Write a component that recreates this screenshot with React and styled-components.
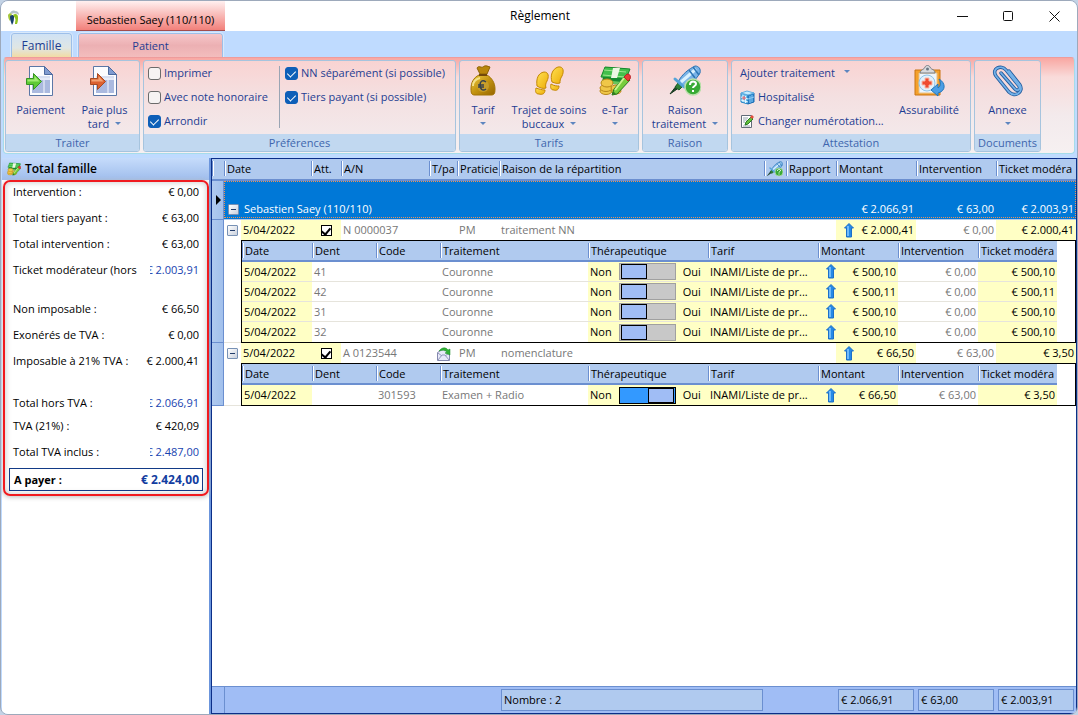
import React, { useState } from "react";
import styled, { createGlobalStyle } from "styled-components";

const GlobalStyle = createGlobalStyle`
  * {
    box-sizing: border-box;
  }
  body {
    margin: 0;
    background: #c3d3e6;
    font-family: "Open Sans", "Noto Sans", sans-serif;
    font-size: 11px;
    line-height: 14px;
    color: #000;
  }
  button,
  input {
    font: inherit;
    margin: 0;
  }
`;

/* ---------- icons ---------- */

const LogoIcon = () => (
  <svg width="12" height="16" viewBox="0 0 12 16" aria-hidden="true">
    <path d="M2 3C3 1 5 0 7 1c3 0 4 2 4 4C9 3 7 4 6 3 5 4 3 4 2 3z" fill="#b4c3c9" />
    <path d="M0 5c1-2 3-2 4-1L3 6c0 2 0 3-1 5C1 10 0 8 0 5z" fill="#a5c63b" />
    <path d="M2 7c0-2 3-3 4-1 0 3 0 6-2 9-1-3-2-5-2-8z" fill="#17406d" />
    <path d="M5 5c2-2 5-1 5 2 0 2 0 5-1 7H7c0-3 1-4 0-6z" fill="#8fc31f" />
  </svg>
);

const PageArrowIcon = ({ light, dark, edge }) => (
  <svg width="32" height="32" viewBox="2 0 32 32" aria-hidden="true">
    <path d="M6.500 1.500h15l8 8v21h-23z" fill="#fbfcff" stroke="#5b77a6" />
    <path d="M9 11h18v17H9z" fill="#aab9df" />
    <path d="M9 11h18v4H9z" fill="#d7dff2" />
    <path d="M11 14h16M21 15v13" stroke="#f5f7fd" />
    <path d="M21.500 1.500v8h8z" fill="#7f9bd0" stroke="#4d6a9f" />
    <path d="M3.500 13.500h7v-5l8 8-8 8v-5h-7z" fill={dark} stroke={edge} />
    <path d="M4.500 14.500h7v-3.500l5 5.500h-12z" fill={light} />
  </svg>
);

const MoneyBagIcon = () => (
  <svg width="28" height="32" viewBox="0 0 28 32" aria-hidden="true">
    <defs>
      <linearGradient id="bag" x1="0" y1="0" x2="1" y2="1">
        <stop offset="0" stopColor="#f0cf45" />
        <stop offset=".5" stopColor="#c39310" />
        <stop offset="1" stopColor="#966500" />
      </linearGradient>
    </defs>
    <path
      d="M10 10C4 13 2 18 2 24c0 5 1 6 4 6h16c3 0 4-1 4-6 0-6-3-11-8-14z"
      fill="url(#bag)"
      stroke="#a37407"
    />
    <path d="M8 3c2-3 4 0 6-1 2-2 4-1 7 0l-3 7h-7z" fill="#b9860b" stroke="#8d6204" />
    <path d="M10 9h8v2h-8z" fill="#72490a" />
    <path d="M4 21c0-5 3-7 7-8" stroke="#f4e28b" strokeWidth="2" fill="none" />
    <circle cx="14" cy="21" r="6" fill="#cca436" opacity=".7" />
    <path
      d="M17 17c-4-3-6 0-6 3s2 7 6 4M9 20h6M9 22h6"
      stroke="#38424c"
      strokeWidth="1.500"
      fill="none"
    />
  </svg>
);

const FootprintsIcon = () => (
  <svg width="32" height="32" viewBox="0 0 32 32" aria-hidden="true">
    <defs>
      <linearGradient id="foot" x1="0" y1="0" x2="1" y2="1">
        <stop offset="0" stopColor="#ffe052" />
        <stop offset="1" stopColor="#edac08" />
      </linearGradient>
    </defs>
    <g fill="url(#foot)" stroke="#c48804">
      <path d="M4 21C3 14 5 8 11 7c5 0 5 5 3 9-1 2-2 4-1 7-3 1-6 0-9-2z" />
      <path d="M3 23c3 1 6 2 9 2 0 4-3 5-6 4-3 0-4-2-3-6z" />
      <path d="M19 17c-2-6 0-13 6-15 6-1 6 5 4 9-2 3-2 5-2 7-3 1-5 0-8-1z" />
      <path d="M18 19c3 2 6 2 8 2 0 4-3 5-5 4-3 0-4-2-3-6z" />
    </g>
  </svg>
);

const MoneyEditIcon = ({ size = 32 }) => (
  <svg width={size} height={size} viewBox="0 0 32 32" aria-hidden="true">
    <path d="M6 2l24 2-3 15-24-2z" fill="#168932" />
    <path d="M6 2l25 2-4 10L2 12z" fill="#43bf4c" stroke="#168a2c" />
    <path d="M5 5l22 2M4 10l22 2" stroke="#9be68f" />
    <path d="M14 3h7l-3 10h-6z" fill="#edf6e4" />
    <path d="M3 15l21 2-1 3-21-2z" fill="#68c75d" />
    <g fill="#f0c748" stroke="#b78618">
      <ellipse cx="7" cy="26" rx="6" ry="3.500" />
      <ellipse cx="7" cy="23" rx="6" ry="3.500" />
      <ellipse cx="8" cy="18" rx="6" ry="4" />
      <ellipse cx="17" cy="26" rx="5" ry="3" />
      <ellipse cx="17" cy="23" rx="5" ry="3" />
    </g>
    <path d="M26 11l5 4-13 14-5 1 2-6z" fill="#77cd3d" stroke="#287c1c" />
    <path d="M25 13l-9 12" stroke="#c9f38e" strokeWidth="2" />
    <path d="M25 12l3-3c3 0 4 2 3 5l-2 2z" fill="#e63d35" stroke="#b82025" />
    <path d="M13 30l1-4 3 3z" fill="#2e7b20" />
  </svg>
);

const PenHelpIcon = ({ size = 32 }) => (
  <svg width={size} height={size} viewBox="0 0 32 32" aria-hidden="true">
    <path d="M1 29l7-9 3 2z" fill="#1c4728" stroke="#16381f" />
    <path d="M6 22l3-4 4 4-3 3z" fill="#2e8137" stroke="#1f5d2a" />
    <path d="M9 17C13 9 20 4 26 1c4 0 6 3 5 7-5 8-9 11-17 14z" fill="#7ab3e7" stroke="#2972b3" />
    <path d="M12 17L27 4" stroke="#d9f1ff" strokeWidth="3" />
    <path d="M24 2l6 8M20 5l6 8" stroke="#2c75b5" strokeWidth="1.500" />
    <path d="M6 14l9 8" stroke="#54a4d9" strokeWidth="3" strokeLinecap="round" />
    <circle cx="24" cy="22" r="8" fill="#39aa35" stroke="#b9dfaa" strokeWidth="1.500" />
    <path d="M21 20c0-5 6-4 6-1 0 2-3 2-3 4M24 25v2" fill="none" stroke="#fff" strokeWidth="2" />
  </svg>
);

const BuildingIcon = () => (
  <svg width="15" height="15" viewBox="0 0 15 15" aria-hidden="true">
    <path d="M1 3l7 2v9l-7-2z" fill="#70c0ef" stroke="#2584c5" />
    <path d="M8 5l6-2v9l-6 2z" fill="#2b84cc" stroke="#1c6db4" />
    <path d="M1 3l6-2 7 2-6 2z" fill="#c5ecff" stroke="#62afe2" />
    <path d="M3 5v7M5.500 6v7M1 7l7 2M1 10l7 2" stroke="#e4f7ff" />
    <path d="M10 6v7M12 5v7M8 9l6-2" stroke="#8bcaf5" />
    <path d="M2 8h4M4 6v4" stroke="#df5965" />
  </svg>
);

const NoteEditIcon = () => (
  <svg width="15" height="15" viewBox="0 0 15 15" aria-hidden="true">
    <path d="M1.500 1.500h10v12h-10z" fill="#fff" stroke="#626b78" />
    <path d="M3 4h5M3 6h4M3 8h2M3 12h7" stroke="#98a4b0" />
    <path d="M5 11l1-3 5-5 2 2-5 5z" fill="#65bf3c" stroke="#287b24" />
    <path d="M10 3l2-2 2 2-2 2z" fill="#e44d3d" />
  </svg>
);

const ClipboardIcon = () => (
  <svg width="32" height="32" viewBox="0 0 32 32" aria-hidden="true">
    <path d="M2 5h25v25H2z" fill="#f4a12c" stroke="#c97512" />
    <path d="M6 8h18v20H6z" fill="#edf5fc" stroke="#e7c189" />
    <path d="M7 8c1-4 4-3 5-6 1-2 4-2 5 0 1 3 5 2 5 6z" fill="#d9dadd" stroke="#777e86" />
    <circle cx="14.500" cy="4" r="1.500" fill="#6c7783" />
    <circle cx="14" cy="18" r="8" fill="#e2f0fb" stroke="#8fc4e9" />
    <path d="M12 13h4v3h3v4h-3v3h-4v-3H9v-4h3z" fill="#ef4c30" stroke="#f9b9a8" />
    <path d="M26 14c7 4 7 12-1 14v3l-7-6 7-6v4c3-2 3-5 1-9z" fill="#4c9ee5" stroke="#2276ba" />
  </svg>
);

const PaperclipIcon = () => (
  <svg width="32" height="32" viewBox="0 0 32 32" aria-hidden="true">
    <g fill="none" strokeLinecap="round">
      <path
        d="M9 8l14 16c2 3 6 0 4-3L14 5C9-1-1 4 4 11l13 16c6 6 15 0 11-7L17 6"
        stroke="#235c9e"
        strokeWidth="3.500"
      />
      <path
        d="M9 8l14 16c2 3 6 0 4-3L14 5C9-1-1 4 4 11l13 16c6 6 15 0 11-7L17 6"
        stroke="#73b1e8"
        strokeWidth="1.800"
      />
    </g>
  </svg>
);

const ArrowUpIcon = () => (
  <svg width="10" height="15" viewBox="0 0 10 15" aria-hidden="true">
    <path d="M5 .500L9.500 5H7.500v9h-5V5H.500z" fill="#2589e6" stroke="#1c6fc9" />
    <path d="M4 3v10" stroke="#8acbff" strokeWidth="1.500" />
  </svg>
);

const MailIcon = () => (
  <svg width="15" height="14" viewBox="0 0 15 14" aria-hidden="true">
    <path d="M1.500 5.500L7 2l6.500 3.500v8h-12z" fill="#e8e9f8" stroke="#8589ae" />
    <path d="M2 13l4-5h3l4 5M2 6l4 3M13 6L9 9" fill="none" stroke="#9297bc" />
    <path d="M3 4c3-4 7-4 9-1l2-1v6L9 6l2-1C9 3 6 3 3 4z" fill="#32b136" stroke="#188a24" strokeWidth=".5" />
  </svg>
);

/* ---------- window frame ---------- */

const Window = styled.div`
  display: flex;
  flex-direction: column;
  min-height: 100vh;
  overflow: hidden;
  border: 1px solid #9da9bb;
  border-radius: 8px;
  background: #bfdbff;
`;

const TitleBar = styled.header`
  display: grid;
  grid-template-columns: 75px 149px 1fr auto;
  height: 30px;
  background: #fff;
`;

const Logo = styled.div`
  padding: 9px 0 0 7px;
`;

const ContextTitle = styled.div`
  display: flex;
  align-items: center;
  justify-content: center;
  padding-top: 8px;
  white-space: nowrap;
  background: linear-gradient(#fff0f0, #f2807a);
  border-bottom: 1px solid #a34d4d;
`;

const WindowTitle = styled.h1`
  margin: 0;
  padding-left: 285px;
  font-size: 12px;
  font-weight: 400;
  line-height: 30px;
`;

const WindowButtons = styled.div`
  display: flex;
`;

const WindowButton = styled.button`
  display: flex;
  align-items: center;
  justify-content: center;
  width: 46px;
  padding: 0;
  border: 0;
  background: none;
`;

const TabStrip = styled.nav`
  display: flex;
  align-items: flex-end;
  gap: 6px;
  height: 26px;
  padding-left: 10px;
`;

const Tab = styled.button`
  width: ${props => props.$width}px;
  height: 24px;
  padding: 0;
  border: 1px solid #9dbfe9;
  border-bottom: 0;
  border-radius: 3px 3px 0 0;
  outline: 1px solid #d9e9fb;
  color: #1e3d92;
  font-size: ${props => (props.$active ? 11 : 12)}px;
  background: ${props =>
    props.$active
      ? "linear-gradient(#f6c6c9, #ecb0b3 50%, #f3bdbd)"
      : "linear-gradient(#cfe2f5, #e0e6e4 60%, #f2dca4)"};
`;

/* ---------- ribbon ---------- */

const Ribbon = styled.section`
  display: flex;
  gap: 3px;
  height: 97px;
  margin: 0 2px 4px;
  padding: 2px 1px 1px;
  border: 1px solid #a5dcea;
  border-top-color: #ee9c9c;
  border-radius: 4px;
  background: linear-gradient(#f9a7a2, #f9dbda 20%, #f3eaec 60%, #f6f0f1);
`;

const Group = styled.section`
  display: flex;
  flex-direction: column;
  width: ${props => props.$width}px;
  overflow: hidden;
  border: 1px solid #a6c4de;
  border-radius: 3px;
  background: linear-gradient(#f9d3d2, #f4e0e1 40%, #f3ecee);
`;

const GroupBody = styled.div`
  display: flex;
  flex: 1;
  justify-content: ${props => props.$align || "center"};
  padding-left: ${props => props.$indent || 0}px;
`;

const GroupTitle = styled.h2`
  margin: 0;
  font-size: 11px;
  font-weight: 400;
  line-height: 17px;
  text-align: center;
  white-space: nowrap;
  color: #3f66ae;
  background: #c1d8f0;
`;

const BigButton = styled.button`
  display: flex;
  flex-direction: column;
  align-items: center;
  width: ${props => props.$width}px;
  padding: 4px 0 0;
  border: 0;
  background: none;
  color: #1e3d92;
  line-height: 14px;
  white-space: nowrap;

  svg {
    margin-bottom: 6px;
  }
`;

const Caret = styled.i`
  display: inline-block;
  margin: ${props => (props.$below ? "5px auto 0" : "0 0 3px 6px")};
  border: 3px solid transparent;
  border-top-color: #5d85bf;
  border-bottom: 0;
`;

const OptionColumn = styled.div`
  display: flex;
  flex-direction: column;
  min-width: 124px;
`;

const Option = styled.label`
  display: flex;
  align-items: center;
  gap: 3px;
  height: 24px;
  color: #1e3d92;
  white-space: nowrap;
`;

const OptionBox = styled.input`
  appearance: none;
  display: flex;
  justify-content: center;
  width: 13px;
  height: 13px;
  border: 1px solid #6b6b6b;
  border-radius: 3px;
  background: #f6f3f3;

  &:checked {
    border-color: #0e5fb8;
    background: #0e5fb8;
  }

  &:checked::after {
    content: "";
    width: 4px;
    height: 7px;
    margin-top: 1px;
    border: solid #fff;
    border-width: 0 1px 1px 0;
    transform: rotate(45deg);
  }
`;

const Divider = styled.div`
  width: 1px;
  height: 62px;
  margin: 5px 5px 0 7px;
  background: #9aa5b4;
`;

const SmallButton = styled.button`
  display: flex;
  align-items: center;
  gap: 3px;
  height: 24px;
  padding: 0;
  border: 0;
  background: none;
  color: #1e3d92;
  white-space: nowrap;
`;

/* ---------- family totals ---------- */

const Body = styled.main`
  display: flex;
  flex: 1;
  padding-left: 1px;
`;

const Side = styled.aside`
  display: flex;
  flex-direction: column;
  width: 209px;
  border-right: 2px solid #6b95dc;
  background: #fff;
`;

const SideTitle = styled.h2`
  display: flex;
  align-items: center;
  gap: 4px;
  height: 22px;
  margin: 0;
  padding-left: 5px;
  font-size: 12px;
  font-weight: 600;
  background: linear-gradient(#c6dcfb, #9fbdec);
`;

const TotalsFrame = styled.section`
  margin: 0 0 0 1px;
  padding: 0 4px 3px;
  border: 2px solid #f01a1f;
  border-radius: 7px;
  box-shadow: 0 1px 5px #bbb, inset 0 0 6px #c4c4c4;
`;

const TotalRow = styled.div`
  display: flex;
  justify-content: space-between;
  height: 20px;
  margin-top: ${props => props.$gap}px;
  padding: 0 4px;
  line-height: 20px;
  white-space: nowrap;
`;

const TotalValue = styled.output`
  display: flex;
  justify-content: flex-end;
  overflow: hidden;
  ${props => props.$computed && "width: 49px; color: #1743b0;"}
`;

const Payable = styled.div`
  display: flex;
  justify-content: space-between;
  align-items: center;
  height: 23px;
  margin-top: 6px;
  padding: 0 3px 0 4px;
  border: 1px solid #123a86;
  font-weight: 700;

  output {
    color: #123da0;
    font-size: 12px;
  }
`;

/* ---------- grid ---------- */

const GridPanel = styled.section`
  display: flex;
  flex: 1;
  flex-direction: column;
  min-width: 0;
  border: 1px solid #0b2e88;
  background: #fff;
`;

const GridTable = styled.table`
  width: 100%;
  table-layout: fixed;
  border-collapse: separate;
  border-spacing: 0;
  white-space: nowrap;
`;

const HeadCell = styled.th`
  height: ${props => (props.$sub ? 21 : 22)}px;
  padding: 0 0 0 3px;
  overflow: hidden;
  font-weight: 400;
  text-align: left;
  vertical-align: middle;
  border-bottom: 2px solid #6b8fd0;
  background: linear-gradient(90deg, #6b8fd0 1px, #fff 1px, #fff 2px, transparent 2px) 0 2px / 2px 15px
      no-repeat,
    #b0caef;

  svg {
    display: block;
  }
`;

const RowHead = styled.td`
  padding: 0;
  border-right: 1px solid #6b8fd0;
  border-bottom: 1px solid #6b8fd0;
  background: linear-gradient(90deg, #b0caef, #a2c0ec);
`;

const Marker = styled.i`
  display: block;
  margin-left: 4px;
  border: 5px solid transparent;
  border-left-color: #000;
  border-right: 0;
`;

const Cell = styled.td`
  height: 20px;
  padding: 0 2px;
  overflow: hidden;
  color: ${props => (props.$edit ? "#000" : "#777")};
  background: ${props => (props.$edit ? "#ffffc5" : "#fff")};
  text-align: ${props => props.$align || "left"};
  border-bottom: ${props => (props.$line ? "1px solid #e6e4dc" : "0")};

  svg {
    display: inline-block;
    vertical-align: middle;
  }
`;

const PatientCell = styled.td`
  height: 39px;
  padding: 0 0 1px;
  border-bottom: 1px solid #b0caef;
  color: #fff;
  background: #0078d7;
`;

const PatientLine = styled.div`
  display: flex;
  align-items: flex-end;
  height: 37px;
  padding: 0 1px 1px 2px;
  border: 1px dotted #f29151;
`;

const PatientName = styled.span`
  flex: 1;
  padding-left: 5px;
`;

const PatientAmount = styled.span`
  width: 80px;
  text-align: right;
`;

const ExpandButton = styled.button`
  display: flex;
  align-items: center;
  justify-content: center;
  width: 11px;
  height: 11px;
  padding: 0;
  border: 1px solid #7791b5;
  border-radius: 1px;
  background: linear-gradient(135deg, #fff, #c9d0dd);

  &::after {
    content: "";
    width: 5px;
    height: 1px;
    background: #223c6a;
  }
`;

const ExpandSlot = styled.span`
  display: flex;
  align-items: center;
  height: 14px;
  padding-left: 1px;
`;

const AttestBox = styled.input`
  appearance: none;
  display: flex;
  justify-content: center;
  width: 11px;
  height: 11px;
  margin: 0 auto;
  border: 1px solid #000;
  background: #fff;

  &:checked::after {
    content: "";
    width: 4px;
    height: 7px;
    border: solid #000;
    border-width: 0 2px 2px 0;
    transform: rotate(40deg);
  }
`;

const AmountLine = styled.div`
  display: flex;
  align-items: center;
  justify-content: space-between;
  padding-left: 6px;
`;

const DetailCell = styled.td`
  padding: 0;
`;

const DetailFrame = styled.div`
  padding-right: 18px;
  border: 1px solid #000;
`;

const SwitchLabel = styled.label`
  display: flex;
  align-items: center;
  gap: 7px;
`;

const Switch = styled.input`
  appearance: none;
  display: flex;
  align-items: center;
  width: 57px;
  height: 17px;
  padding: 0 1px;
  border: 1px solid #a0a0a0;
  background: #c8c8c8;

  &::after {
    content: "";
    width: 24px;
    height: 13px;
    border: 1px solid #000;
    background: #a0bdf5;
  }

  &:checked {
    justify-content: flex-end;
    border-color: #000;
    background: #3399ff;
  }
`;

const Summary = styled.footer`
  display: grid;
  grid-template-columns: 285px 262px 1fr 76px 76px 76px;
  column-gap: 4px;
  margin-top: auto;
  padding: 2px 2px 2px 0;
  border-top: 1px solid #6b8fd0;
  background: linear-gradient(90deg, #a0bdf5 12px, #6b8fd0 12px, #6b8fd0 13px, #a0bdf5 13px);
`;

const SummaryBox = styled.output`
  height: 22px;
  padding-left: 2px;
  grid-column: ${props => props.$col};
  line-height: 20px;
  white-space: nowrap;
  border: 1px solid #6b8fd0;
  background: #b0caef;
`;

/* ---------- data ---------- */

const totals = [
  { label: "Intervention :", value: "€ 0,00", gap: 0 },
  { label: "Total tiers payant :", value: "€ 63,00", gap: 6 },
  { label: "Total intervention :", value: "€ 63,00", gap: 6 },
  { label: "Ticket modérateur (hors", value: "€ 2.003,91", gap: 6, computed: true },
  { label: "Non imposable :", value: "€ 66,50", gap: 19 },
  { label: "Exonérés de TVA :", value: "€ 0,00", gap: 6 },
  { label: "Imposable à 21% TVA :", value: "€ 2.000,41", gap: 6 },
  { label: "Total hors TVA :", value: "€ 2.066,91", gap: 22, computed: true },
  { label: "TVA (21%) :", value: "€ 420,09", gap: 3 },
  { label: "Total TVA inclus :", value: "€ 2.487,00", gap: 6, computed: true }
];

const crown = { date: "5/04/2022", code: "", name: "Couronne", part: "€ 0,00" };

const attestations = [
  {
    number: "N 0000037",
    reason: "traitement NN",
    amount: "€ 2.000,41",
    part: "€ 0,00",
    ticket: "€ 2.000,41",
    lines: [
      { ...crown, tooth: "41", amount: "€ 500,10", ticket: "€ 500,10" },
      { ...crown, tooth: "42", amount: "€ 500,11", ticket: "€ 500,11" },
      { ...crown, tooth: "31", amount: "€ 500,10", ticket: "€ 500,10" },
      { ...crown, tooth: "32", amount: "€ 500,10", ticket: "€ 500,10" }
    ]
  },
  {
    number: "A 0123544",
    mail: true,
    reason: "nomenclature",
    amount: "€ 66,50",
    part: "€ 63,00",
    ticket: "€ 3,50",
    lines: [
      {
        date: "5/04/2022",
        tooth: "",
        code: "301593",
        name: "Examen + Radio",
        therapeutic: true,
        amount: "€ 66,50",
        part: "€ 63,00",
        ticket: "€ 3,50"
      }
    ]
  }
];

const gridColumns = [12, 17, 70, 30, 88, 28, 42, null, 22, 50, 80, 80, 80];
const detailColumns = [70, 64, 64, null, 120, 110, 80, 80, 79];
const detailTitles = [
  "Date",
  "Dent",
  "Code",
  "Traitement",
  "Thérapeutique",
  "Tarif",
  "Montant",
  "Intervention",
  "Ticket modéra"
];

/* ---------- parts ---------- */

const Columns = ({ widths }) => (
  <colgroup>
    {widths.map((width, i) => (
      <col key={i} width={width || undefined} />
    ))}
  </colgroup>
);

const CheckOption = ({ label, checked }) => (
  <Option>
    <OptionBox type="checkbox" defaultChecked={checked} />
    {label}
  </Option>
);

const RibbonBar = () => (
  <Ribbon>
    <Group $width={135}>
      <GroupBody>
        <BigButton $width={64}>
          <PageArrowIcon light="#a0ec72" dark="#5fca35" edge="#369324" />
          Paiement
        </BigButton>
        <BigButton $width={64}>
          <PageArrowIcon light="#f2a274" dark="#dc6130" edge="#a84921" />
          Paie plus
          <span>
            tard
            <Caret />
          </span>
        </BigButton>
      </GroupBody>
      <GroupTitle>Traiter</GroupTitle>
    </Group>

    <Group $width={313}>
      <GroupBody $align="flex-start" $indent={4}>
        <OptionColumn>
          <CheckOption label="Imprimer" />
          <CheckOption label="Avec note honoraire" />
          <CheckOption label="Arrondir" checked />
        </OptionColumn>
        <Divider />
        <OptionColumn>
          <CheckOption label="NN séparément (si possible)" checked />
          <CheckOption label="Tiers payant (si possible)" checked />
        </OptionColumn>
      </GroupBody>
      <GroupTitle>Préférences</GroupTitle>
    </Group>

    <Group $width={180}>
      <GroupBody>
        <BigButton $width={46}>
          <MoneyBagIcon />
          Tarif
          <Caret $below />
        </BigButton>
        <BigButton $width={86}>
          <FootprintsIcon />
          Trajet de soins
          <span>
            buccaux
            <Caret />
          </span>
        </BigButton>
        <BigButton $width={46}>
          <MoneyEditIcon />
          e-Tar
          <Caret $below />
        </BigButton>
      </GroupBody>
      <GroupTitle>Tarifs</GroupTitle>
    </Group>

    <Group $width={86}>
      <GroupBody>
        <BigButton $width={80}>
          <PenHelpIcon />
          Raison
          <span>
            traitement
            <Caret />
          </span>
        </BigButton>
      </GroupBody>
      <GroupTitle>Raison</GroupTitle>
    </Group>

    <Group $width={240}>
      <GroupBody $align="space-between" $indent={8}>
        <OptionColumn>
          <SmallButton>
            Ajouter traitement
            <Caret />
          </SmallButton>
          <SmallButton>
            <BuildingIcon />
            Hospitalisé
          </SmallButton>
          <SmallButton>
            <NoteEditIcon />
            Changer numérotation...
          </SmallButton>
        </OptionColumn>
        <BigButton $width={82}>
          <ClipboardIcon />
          Assurabilité
        </BigButton>
      </GroupBody>
      <GroupTitle>Attestation</GroupTitle>
    </Group>

    <Group $width={67}>
      <GroupBody>
        <BigButton $width={60}>
          <PaperclipIcon />
          Annexe
          <Caret $below />
        </BigButton>
      </GroupBody>
      <GroupTitle>Documents</GroupTitle>
    </Group>
  </Ribbon>
);

const FamilyTotals = () => (
  <Side>
    <SideTitle>
      <MoneyEditIcon size={14} />
      Total famille
    </SideTitle>
    <TotalsFrame>
      {totals.map(row => (
        <TotalRow key={row.label} $gap={row.gap}>
          <span>{row.label}</span>
          <TotalValue $computed={row.computed}>{row.value}</TotalValue>
        </TotalRow>
      ))}
      <Payable>
        A payer :<output>€ 2.424,00</output>
      </Payable>
    </TotalsFrame>
  </Side>
);

const DetailTable = ({ lines }) => (
  <DetailFrame>
    <GridTable>
      <Columns widths={detailColumns} />
      <thead>
        <tr>
          {detailTitles.map(title => (
            <HeadCell key={title} $sub>
              {title}
            </HeadCell>
          ))}
        </tr>
      </thead>
      <tbody>
        {lines.map((line, i) => {
          const rule = i < lines.length - 1;
          return (
            <tr key={i}>
              <Cell $edit $line={rule}>{line.date}</Cell>
              <Cell $line={rule}>{line.tooth}</Cell>
              <Cell $line={rule}>{line.code}</Cell>
              <Cell $line={rule}>{line.name}</Cell>
              <Cell $edit $line={rule}>
                <SwitchLabel>
                  Non
                  <Switch type="checkbox" role="switch" defaultChecked={line.therapeutic} />
                  Oui
                </SwitchLabel>
              </Cell>
              <Cell $edit $line={rule}>INAMI/Liste de pr...</Cell>
              <Cell $edit $line={rule}>
                <AmountLine>
                  <ArrowUpIcon />
                  {line.amount}
                </AmountLine>
              </Cell>
              <Cell $align="right" $line={rule}>{line.part}</Cell>
              <Cell $edit $align="right" $line={rule}>{line.ticket}</Cell>
            </tr>
          );
        })}
      </tbody>
    </GridTable>
  </DetailFrame>
);

const Attestation = ({ item }) => {
  const [open, setOpen] = useState(true);
  return (
    <>
      <tr>
        <RowHead rowSpan={open ? 2 : 1} />
        <Cell>
          <ExpandSlot>
            <ExpandButton aria-label="Détails" onClick={() => setOpen(!open)} />
          </ExpandSlot>
        </Cell>
        <Cell $edit>5/04/2022</Cell>
        <Cell $edit>
          <AttestBox type="checkbox" aria-label="Att." defaultChecked />
        </Cell>
        <Cell>{item.number}</Cell>
        <Cell $align="center">{item.mail && <MailIcon />}</Cell>
        <Cell>PM</Cell>
        <Cell>{item.reason}</Cell>
        <Cell />
        <Cell />
        <Cell $edit>
          <AmountLine>
            <ArrowUpIcon />
            {item.amount}
          </AmountLine>
        </Cell>
        <Cell $align="right">{item.part}</Cell>
        <Cell $edit $align="right">{item.ticket}</Cell>
      </tr>
      {open && (
        <tr>
          <Cell $line />
          <DetailCell colSpan={11}>
            <DetailTable lines={item.lines} />
          </DetailCell>
        </tr>
      )}
    </>
  );
};

const Grid = () => (
  <GridPanel>
    <GridTable>
      <Columns widths={gridColumns} />
      <thead>
        <tr>
          <HeadCell />
          <HeadCell colSpan={2}>Date</HeadCell>
          <HeadCell>Att.</HeadCell>
          <HeadCell>A/N</HeadCell>
          <HeadCell>T/pa</HeadCell>
          <HeadCell>Praticie</HeadCell>
          <HeadCell>Raison de la répartition</HeadCell>
          <HeadCell>
            <PenHelpIcon size={16} />
          </HeadCell>
          <HeadCell>Rapport</HeadCell>
          <HeadCell>Montant</HeadCell>
          <HeadCell>Intervention</HeadCell>
          <HeadCell>Ticket modéra</HeadCell>
        </tr>
      </thead>
      <tbody>
        <tr>
          <RowHead>
            <Marker />
          </RowHead>
          <PatientCell colSpan={12}>
            <PatientLine>
              <ExpandSlot>
                <ExpandButton aria-label="Patient" />
              </ExpandSlot>
              <PatientName>Sebastien Saey (110/110)</PatientName>
              <PatientAmount>€ 2.066,91</PatientAmount>
              <PatientAmount>€ 63,00</PatientAmount>
              <PatientAmount>€ 2.003,91</PatientAmount>
            </PatientLine>
          </PatientCell>
        </tr>
        {attestations.map(item => (
          <Attestation key={item.number} item={item} />
        ))}
      </tbody>
    </GridTable>
    <Summary>
      <SummaryBox $col={2}>Nombre : 2</SummaryBox>
      <SummaryBox $col={4}>€ 2.066,91</SummaryBox>
      <SummaryBox $col={5}>€ 63,00</SummaryBox>
      <SummaryBox $col={6}>€ 2.003,91</SummaryBox>
    </Summary>
  </GridPanel>
);

const App = () => (
  <>
    <GlobalStyle />
    <Window>
      <TitleBar>
        <Logo>
          <LogoIcon />
        </Logo>
        <ContextTitle>Sebastien Saey (110/110)</ContextTitle>
        <WindowTitle>Règlement</WindowTitle>
        <WindowButtons>
          <WindowButton aria-label="Réduire">
            <svg width="11" height="11" viewBox="0 0 11 11" stroke="#111">
              <path d="M0 5.500h11" />
            </svg>
          </WindowButton>
          <WindowButton aria-label="Agrandir">
            <svg width="11" height="11" viewBox="0 0 11 11" stroke="#111" fill="none">
              <rect x=".5" y=".5" width="9" height="9" rx="1" />
            </svg>
          </WindowButton>
          <WindowButton aria-label="Fermer">
            <svg width="11" height="11" viewBox="0 0 11 11" stroke="#111">
              <path d="M.5 .5l10 10M10.500 .5l-10 10" />
            </svg>
          </WindowButton>
        </WindowButtons>
      </TitleBar>
      <TabStrip>
        <Tab $width={61}>Famille</Tab>
        <Tab $width={145} $active>
          Patient
        </Tab>
      </TabStrip>
      <RibbonBar />
      <Body>
        <FamilyTotals />
        <Grid />
      </Body>
    </Window>
  </>
);

export default App;
